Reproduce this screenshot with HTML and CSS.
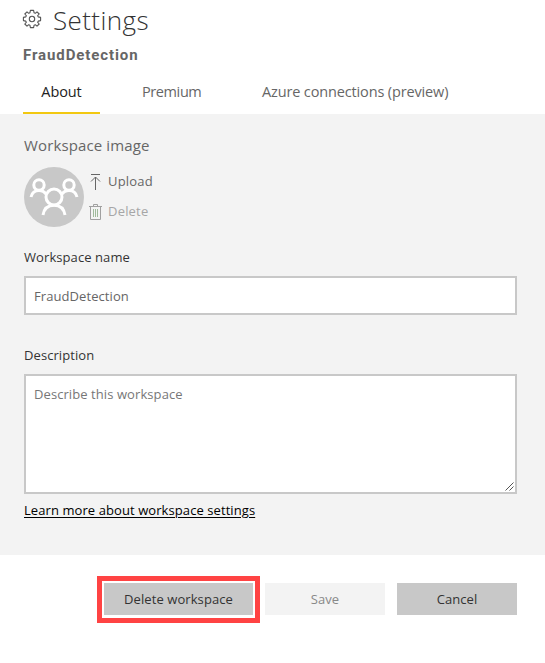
FILE: index.html
```html
<!DOCTYPE html>
<html lang="en">
<head>
<meta charset="utf-8">
<title>Settings</title>
<link rel="stylesheet" href="styles.css">
</head>
<body>
<header class="header">
  <div class="title-row">
    <svg class="gear" viewBox="-10 -10 20 20" width="20" height="20"><path d="M-1.6-8.6H1.6L2.1-6.2L3.3-5.7L5-7.2L7.2-5L5.7-3.3L6.2-2.1L8.6-1.6V1.6L6.2 2.1L5.7 3.3L7.2 5L5 7.2L3.3 5.7L2.1 6.2L1.6 8.6H-1.6L-2.1 6.2L-3.3 5.7L-5 7.2L-7.2 5L-5.7 3.3L-6.2 2.1L-8.6 1.6V-1.6L-6.2-2.1L-5.7-3.3L-7.2-5L-5-7.2L-3.3-5.7L-2.1-6.2Z"/><circle r="2.7"/></svg>
    <h1 class="title"><span>Settings</span></h1>
  </div>
  <h2 class="subtitle"><span>FraudDetection</span></h2>
  <nav class="tabs">
    <a class="tab active"><span>About</span></a>
    <a class="tab premium"><span>Premium</span></a>
    <a class="tab azure"><span>Azure connections (preview)</span></a>
  </nav>
</header>
<main class="panel">
  <h3 class="image-label"><span>Workspace image</span></h3>
  <div class="image-row">
    <svg class="avatar" viewBox="0 0 60 60" width="60" height="60"><circle class="disc" cx="30" cy="30" r="30"/><g class="people"><circle cx="15" cy="18" r="5.2"/><circle cx="45" cy="18" r="5.2"/><circle cx="30" cy="30" r="8"/><path d="M7 30C8 26 11 23.6 15 23.6C18 23.6 20.5 25 22.5 27.5M53 30C52 26 49 23.6 45 23.6C42 23.6 39.5 25 37.5 27.5M19 48C20 42 24 38.2 30 38.2C36 38.2 40 42 41 48"/></g></svg>
    <div class="actions">
      <div class="action"><svg viewBox="0 0 14 18" width="14" height="18"><path d="M2 2.5H11M6.5 18V5M2 9.5L6.5 5L11 9.5"/></svg><span>Upload</span></div>
      <div class="action disabled"><svg viewBox="0 0 14 18" width="14" height="18"><path d="M0 4.5H13M4.5 4V2.5H8.5V4M1.5 5V17.5H11.5V5"/><path class="bars" d="M4.5 7V15M6.5 7V15M8.5 7V15"/></svg><span>Delete</span></div>
    </div>
  </div>
  <label class="label name-label"><span>Workspace name</span></label>
  <div class="field"><span>FraudDetection</span></div>
  <label class="label desc-label"><span>Description</span></label>
  <div class="field area"><span>Describe this workspace</span><svg class="grip" viewBox="0 0 9 9" width="9" height="9"><path d="M.5 8.5L8.5 .5M4.5 8.5L8.5 4.5"/></svg></div>
  <a class="link"><span>Learn more about workspace settings</span></a>
</main>
<footer class="footer">
  <div class="callout"><div class="button wide"><span>Delete workspace</span></div></div>
  <div class="button save"><span>Save</span></div>
  <div class="button cancel"><span>Cancel</span></div>
</footer>
</body>
</html>
```
FILE: styles.css
```css
* { box-sizing: border-box; }
body {
  margin: 0;
  height: 663px;
  background: #fff;
  color: #333;
  font: 13px/20px "Open Sans", "Noto Sans", sans-serif;
  letter-spacing: .08px;
  overflow: hidden;
}
span { white-space: nowrap; }
svg { display: block; flex: none; fill: none; }
h1, h2, h3 { margin: 0; }
.header { height: 114px; padding-left: 23px; }
.title-row { display: flex; height: 42px; }
.gear { margin: 9px 11px 0 -1px; stroke: #555; stroke-width: 1.1; stroke-linejoin: round; }
.title { font-size: 26px; font-weight: 300; line-height: 40px; letter-spacing: .4px; }
.subtitle {
  height: 26px;
  color: #666;
  font: 700 15px/26px Roboto, sans-serif;
  letter-spacing: .9px;
}
.tabs { display: flex; height: 46px; letter-spacing: -.1px; }
.tab { height: 46px; padding-top: 14px; color: #666; font-size: 14.5px; }
.tab.active { width: 77px; color: #222; border-bottom: 2px solid #f2c811; text-align: center; }
.premium { width: 120px; padding-left: 42px; letter-spacing: -.4px; }
.azure { padding-left: 42px; letter-spacing: -.14px; }
.panel { height: 441px; padding: 21px 28px 0 24px; background: #f3f3f3; }
.image-label { height: 32px; color: #666; font-size: 15px; font-weight: 400; line-height: 21px; letter-spacing: .13px; }
.image-row { display: flex; gap: 5px; height: 60px; }
.disc { fill: #c8c8c8; }
.people { stroke: #fff; stroke-width: 3; }
.actions { padding-top: 4px; }
.action { display: flex; align-items: center; gap: 5px; height: 20px; margin-bottom: 10px; color: #666; stroke: #666; letter-spacing: .2px; }
.action span { stroke: none; }
.disabled { color: #a6a6a6; stroke: #a0a0a0; }
.bars { stroke: #9fba9b; }
.label { display: block; height: 20px; }
.name-label { margin: 20px 0 9px; }
.field { height: 39px; padding: 8px; border: 2px solid #c8c8c8; background: #fff; color: #666; }
.desc-label { margin: 30px 0 9px; }
.area { position: relative; height: 120px; color: #777; }
.grip { position: absolute; right: 1px; bottom: 1px; stroke: #555; stroke-width: 1; }
.link { display: block; margin-top: 6px; color: #000; text-decoration: underline; text-underline-offset: 2px; }
.footer { display: flex; padding: 21px 28px 0 97px; }
.callout { width: 163px; height: 47px; padding: 2px; border: 5px solid #ff4343; }
.button { width: 120px; height: 32px; background: #c8c8c8; text-align: center; line-height: 32px; }
.wide { width: 149px; }
.save { margin: 7px 12px 0 5px; background: #f3f3f3; color: #888; }
.cancel { margin-top: 7px; }
```
